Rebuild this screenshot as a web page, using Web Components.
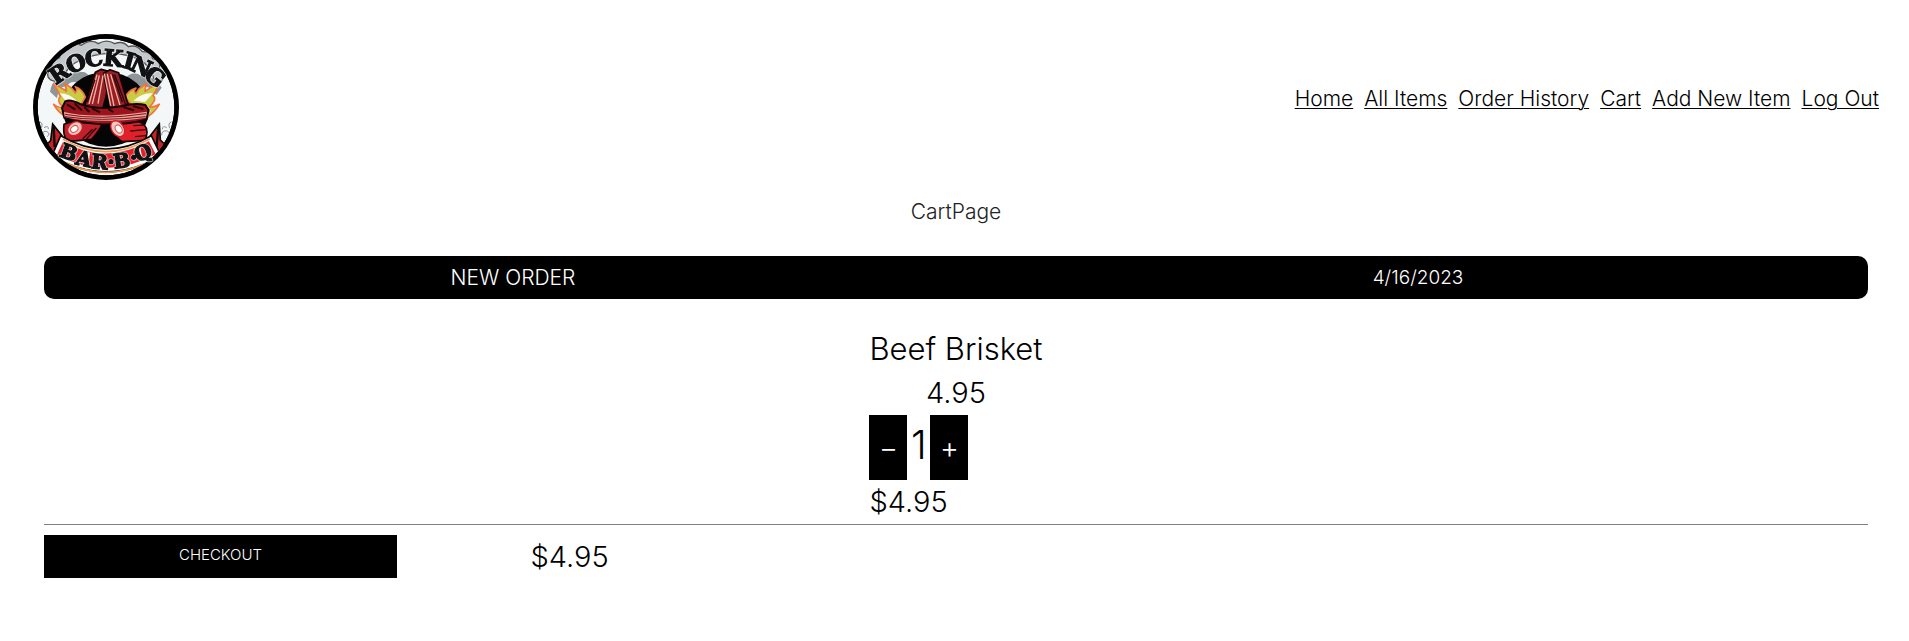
<!DOCTYPE html>
<html lang="en">
<head>
<meta charset="utf-8">
<meta name="viewport" content="width=device-width, initial-scale=1">
<title>Rocking Bar-B-Q</title>
<style>
body{margin:0;background:#fff;color:#000;font:300 21px/24px Inter,"Open Sans",sans-serif}
</style>
</head>
<body>
<cart-page></cart-page>
<script>
const define=(name,html)=>customElements.define(name,class extends HTMLElement{
  constructor(){super();this.attachShadow({mode:'open'}).innerHTML=html;}
});

define('brand-logo',`<style>:host{display:block;width:146px;height:146px;flex:none}svg{display:block;width:100%;height:100%}
text{font-family:"DejaVu Serif","Liberation Serif",serif;font-weight:700}
.word{fill:#101214;stroke:#101214;stroke-width:4px;text-anchor:middle;filter:drop-shadow(1px 1px 0 #fff) drop-shadow(-1px -1px 0 #fff)}</style>
<svg viewBox="39 42 438 438" role="img" aria-label="Rocking Bar-B-Q logo">
<defs><clipPath id="disc"><circle cx="258" cy="261" r="205"/></clipPath></defs>
<circle cx="258" cy="261" r="219" fill="#000"/>
<g clip-path="url(#disc)">
<circle cx="258" cy="261" r="205" fill="#f4f7f7"/>
<path d="M92 180Q72 166 96 143Q91 126 119 113Q119 92 146 88Q158 64 184 76Q212 55 235 71Q260 56 284 71Q309 61 325 80Q350 72 367 95Q393 94 398 116Q424 122 418 145Q440 156 424 185L405 195Q397 125 330 108Q255 88 181 120Q137 139 121 190Z" fill="#c3c8ca" stroke="#555" stroke-width="4"/>
<path d="M90 215Q98 168 142 175Q159 150 195 157L214 172L183 190Q148 178 141 200Q116 194 111 235ZM318 172Q343 150 364 168Q405 164 425 203L409 225Q388 193 361 203Q354 184 318 190Z" fill="#8f969a"/>
<ellipse cx="258" cy="268" rx="130" ry="112" fill="#050505"/>
<g fill="#c9cb45" stroke="#f3713f" stroke-width="5" stroke-linejoin="round"><path d="M149 296Q116 282 101 253Q117 266 128 261Q108 242 121 229Q110 204 100 193Q125 203 139 214Q139 199 132 191Q155 199 166 219Q174 209 166 200Q187 207 196 231L185 250Q157 264 149 296Z"/><path d="M374 295Q400 283 418 253Q398 264 388 261Q413 237 399 227Q413 203 418 190Q392 201 375 214Q374 203 382 191Q355 202 348 221Q339 214 348 204Q320 213 317 233L335 255Q361 263 374 295Z"/></g>
<g fill="#fff" opacity=".9"><path d="M119 220Q145 219 170 242L137 243ZM120 273Q144 276 153 250L135 259ZM399 220Q367 216 340 242L375 246ZM394 276L362 252L385 260Z"/></g>
<g stroke="#150305" stroke-width="5" stroke-linejoin="round"><path fill="#981e25" d="M192 263L226 157L244 148L268 155L254 264Z"/><path fill="#981e25" d="M251 160L270 149L296 158L323 250L311 270L270 266Z"/><path d="M132 313Q155 303 178 307L248 310Q237 333 215 358L150 364Q127 358 132 313Z" fill="#c4202b"/><path d="M267 306L349 302Q381 311 381 337L377 361L307 365Q289 357 267 306Z" fill="#e2202b"/></g>
<path d="M246 264L258 306L271 264L258 222Z" fill="#080505"/>
<g stroke="#f4b4a5" stroke-width="4" fill="none"><path d="M207 252L231 164M217 252L238 166M234 251L249 166M253 161L272 258M262 162L282 258M272 163L300 256"/></g>
<g stroke="#29090b" stroke-width="4" fill="none"><path d="M202 246L225 179M284 164L316 252M278 162L307 246M340 317L376 315M331 333L378 329M345 350L378 347M188 356L218 328M199 357L229 324"/></g>
<path d="M136 244Q151 237 180 252Q235 272 303 259Q346 247 376 255L386 270L379 299Q317 315 242 313Q164 306 133 293L126 264Z" fill="#9b141b" stroke="#120305" stroke-width="6"/>
<path d="M132 276Q220 298 381 275L378 293Q232 313 134 291Z" fill="#f0a49b"/><path d="M135 283Q237 302 378 281M135 290Q240 306 377 290" fill="none" stroke="#771219" stroke-width="3"/>
<path d="M141 253L166 269M164 250L186 272M193 261L208 276M216 265L240 277M265 267L280 276M310 261L342 271M339 258L370 267" stroke="#240405" stroke-width="6"/>
<g fill="#f4c8bd" stroke="#d41d2b" stroke-width="4"><ellipse cx="165" cy="326" rx="24" ry="19" transform="rotate(-37 165 326)"/><ellipse cx="293" cy="326" rx="18" ry="26" transform="rotate(-34 293 326)"/></g>
<g fill="#fff" stroke="#d95854" stroke-width="3"><ellipse cx="163" cy="327" rx="12" ry="9" transform="rotate(-37 163 327)"/><ellipse cx="296" cy="327" rx="9" ry="13" transform="rotate(-34 296 327)"/></g>
<g fill="none" stroke="#8b9499" stroke-width="3"><path d="M60 306Q70 309 64 325M72 323q14-8 13 4M72 344q-6-14 9-9q12 7 0 15M454 306Q443 309 449 325M440 323q-13-8-13 5M442 350q11-10 0-17q-18-3-17 13"/></g>
<path d="M98 312L126 347L113 399L67 387L92 362ZM418 312L391 347L403 398L449 387L421 360Z" fill="#ca2027" stroke="#080808" stroke-width="5"/>
<path d="M101 320L104 381M415 320L410 380" stroke="#090909" stroke-width="7"/>
<path d="M122 347Q257 427 394 347L423 407Q257 504 96 407Z" fill="#fff" stroke="#080808" stroke-width="5"/>
<path d="M128 357Q257 433 389 356M110 414Q258 500 408 414" fill="none" stroke="#ef9a50" stroke-width="5"/>
<path d="M129 365Q257 436 387 364L407 403Q258 484 111 404Z" fill="#e32028"/>
<g stroke="#fff" stroke-width="7"><path d="M158 379L149 426M207 397L199 446M357 380L366 430"/></g>
</g>
<g class="word" font-size="68">
<text transform="translate(131 180) rotate(-34)">R</text><text transform="translate(177 152) rotate(-22)">O</text><text transform="translate(225 138) rotate(-8)">C</text><text transform="translate(278 138) rotate(5)">K</text><text transform="translate(321 146) rotate(15)">I</text><text transform="translate(354 161) rotate(25)">N</text><text transform="translate(390 189) rotate(38)">G</text></g>
<g class="word" font-size="60">
<text transform="translate(139 417) rotate(20)">B</text><text transform="translate(187 437) rotate(13)">A</text><text transform="translate(237 446) rotate(5)">R</text><circle cx="273" cy="425" r="6"/><text transform="translate(308 443) rotate(-8)">B</text><circle cx="341" cy="412" r="6"/><text transform="translate(377 417) rotate(-22)">Q</text></g>
</svg>`);

define('site-header',`<style>:host{display:flex;justify-content:space-between;align-items:center;padding:34px 30px 0 33px}
nav{display:flex;flex-wrap:wrap;gap:11px;padding-bottom:16px}</style><brand-logo></brand-logo><nav aria-label="Main"><slot></slot></nav>`);

define('nav-link',`<style>:host{display:block}a{color:inherit;text-underline-offset:2px;text-decoration-thickness:1px;white-space:nowrap}</style><a href="#"><slot></slot></a>`);

define('order-bar',`<style>:host{display:grid;grid-template-columns:938fr 872fr;padding-right:14px;align-items:center;text-align:center;height:43px;box-sizing:border-box;border-radius:10px;background:#000;color:#fff}
</style><slot></slot>`);

define('quantity-stepper',`<style>:host{display:flex;align-items:stretch;height:65px}
button{width:38px;border:0;border-radius:0;padding:0;background:#000;color:#fff;font:300 29px/32px Inter,sans-serif}
span{width:23px;text-align:center;font-size:40px;line-height:60px}</style>
<button type="button" aria-label="Decrease">−</button><span><slot></slot></span><button type="button" aria-label="Increase">+</button>`);

define('cart-item',`<style>:host{display:flex;flex-direction:column;width:max-content;margin:28px auto 0;font-size:29px;line-height:44px}
.name{font-size:31px}.price{text-align:center}</style><div class="name"><slot name="name"></slot></div><div class="price"><slot name="price"></slot></div><quantity-stepper><slot name="qty"></slot></quantity-stepper><div><slot name="total"></slot></div>`);

define('checkout-row',`<style>:host{display:grid;grid-template-columns:353fr 345fr 1126fr;align-items:center;border-top:1px solid #808080;padding-top:10px}
button{height:43px;border:0;border-radius:0;background:#000;color:#fff;font:300 15px/20px Inter,sans-serif;padding:0 0 4px}
div{text-align:center;font-size:29px;line-height:43px}</style><button type="button">CHECKOUT</button><div><slot></slot></div>`);

define('cart-page',`<style>:host{display:block}main{padding:20px 41px 40px 44px}h1{margin:0 0 32px;text-align:center;font:inherit;color:#222}.date{font-size:19px}</style>
<site-header><nav-link>Home</nav-link><nav-link>All Items</nav-link><nav-link>Order History</nav-link><nav-link>Cart</nav-link><nav-link>Add New Item</nav-link><nav-link>Log Out</nav-link></site-header>
<main><h1>CartPage</h1><order-bar><span>NEW ORDER</span><span class="date">4/16/2023</span></order-bar>
<cart-item><span slot="name">Beef Brisket</span><span slot="price">4.95</span><span slot="qty">1</span><span slot="total">$4.95</span></cart-item>
<checkout-row>$4.95</checkout-row></main>`);
</script>
</body>
</html>
